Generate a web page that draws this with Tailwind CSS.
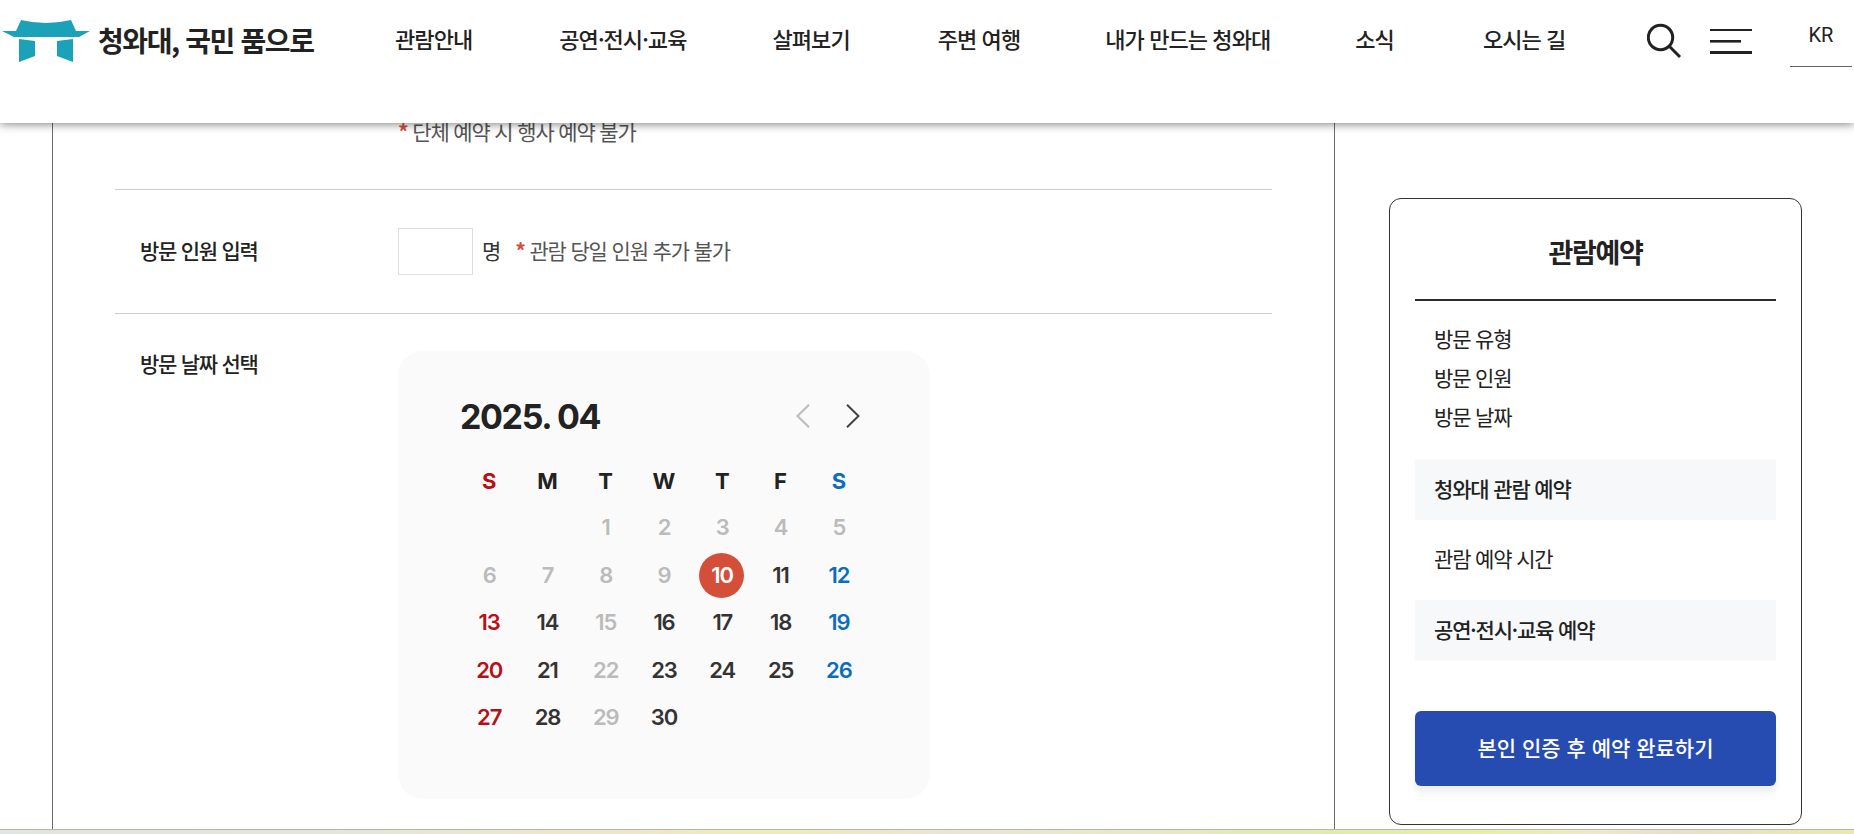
<!DOCTYPE html>
<html lang="ko">
    <head>
        <meta charset="UTF-8">
        <meta name="viewport" content="width=device-width, initial-scale=1.0">
        <title>관람예약 - 청와대, 국민 품으로</title>
        <script src="https://cdn.jsdelivr.net/npm/@tailwindcss/browser@4"></script>
    </head>
    <body class="h-[834px] overflow-hidden bg-white text-[#222] font-['Noto_Sans_CJK_KR',sans-serif] flex flex-col">

        <!-- Header -->
        <header class="relative z-10 h-[123px] shrink-0 bg-white shadow-[0_1px_9px_rgba(0,0,0,0.5)] flex items-start">
            <a href="#" class="flex items-start pl-[2px] w-[395px] shrink-0">
              <svg class="mt-[19px] w-[88px] h-[44px] shrink-0" viewBox="0 0 88 44" fill="#1ba1b8">
                <path d="M0 12H14L19 1Q44 7 69 1L74 12H88L77 18H12Z"/>
                <path d="M17 20L33 22V37L17 43Z"/>
                <path d="M71 20L55 22V37L71 43Z"/>
              </svg>
              <span class="ml-[8px] mt-[20px] text-[28px] leading-[40px] font-bold tracking-[-0.05em] whitespace-nowrap">청와대, 국민 품으로</span>
            </a>
            <nav class="flex mt-[22px] text-[22px] leading-[32px] font-medium tracking-[-0.042em] whitespace-nowrap">
              <a href="#">관람안내</a>
              <a href="#" class="ml-[87px]">공연·전시·교육</a>
              <a href="#" class="ml-[86px]">살펴보기</a>
              <a href="#" class="ml-[88px]">주변 여행</a>
              <a href="#" class="ml-[85px]">내가 만드는 청와대</a>
              <a href="#" class="ml-[85px]">소식</a>
              <a href="#" class="ml-[89px]">오시는 길</a>
            </nav>
            <div class="ml-auto flex items-start pr-[2px]">
              <svg class="mt-[23px] w-[35px] h-[36px]" viewBox="0 0 35 36" fill="none" stroke="#222" stroke-width="3">
                <circle cx="13.5" cy="14.5" r="12.2"/>
                <path d="M22.3 23.3L33 34"/>
              </svg>
              <svg class="ml-[28px] mt-[28px] w-[42px] h-[28px]" viewBox="0 0 42 28" fill="#222">
                <rect x="0" y="1" width="42" height="2"/>
                <rect x="0" y="12" width="31" height="2.6"/>
                <rect x="0" y="23" width="42" height="3"/>
              </svg>
              <div class="ml-[38px] w-[62px] h-[67px] border-b border-[#666] pt-[20px] text-center text-[20px] leading-[30px] font-['Roboto',sans-serif]">KR</div>
            </div>
        </header>

        <main class="h-[706px] shrink-0 flex items-start">
            <!-- Reservation form -->
            <section class="ml-[52px] w-[1283px] h-[706px] border-x border-[#6b6b6b] px-[62px]">
              <div class="flex items-start h-[67px] border-b border-[#ccc] pl-[283px]">
                <p class="-mt-[8px] text-[21px] leading-[32px] text-[#555] tracking-[-0.055em]"><span class="text-[#d44f3a] font-bold">*</span> 단체 예약 시 행사 예약 불가</p>
              </div>

              <div class="h-[124px] border-b border-[#ccc] flex items-center text-[21px] leading-[30px] tracking-[-0.055em]">
                <label for="visitors" class="w-[258px] ml-[25px] pb-[4px] font-medium tracking-[-0.06em]">방문 인원 입력</label>
                <input id="visitors" type="text" class="w-[75px] h-[47px] border border-[#ddd] bg-white">
                <span class="ml-[9px] pb-[4px] text-[#333]">명</span>
                <p class="ml-[15px] pb-[4px] text-[#555]"><span class="text-[#d44f3a] font-bold">*</span> 관람 당일 인원 추가 불가</p>
              </div>

              <div class="pt-[37px] flex items-start">
                <h3 class="w-[258px] ml-[25px] -mt-[2px] text-[21px] leading-[28px] font-medium tracking-[-0.06em]">방문 날짜 선택</h3>

                <div class="w-[532px] h-[448px] rounded-[25px] bg-[#fafafa] pt-[42px] px-[62px] font-['Inter',sans-serif]">
                  <div class="flex items-center justify-between h-[46px] pr-[8px]">
                    <h4 class="text-[34px] leading-[45px] font-bold tracking-[-0.04em]">2025. 04</h4>
                    <div class="flex gap-[36px]">
                      <svg class="w-[14px] h-[24px]" viewBox="0 0 14 24" fill="none" stroke="#bbb" stroke-width="2"><path d="M13 0.7L1.5 12L13 23.3"/></svg>
                      <svg class="w-[14px] h-[24px]" viewBox="0 0 14 24" fill="none" stroke="#444" stroke-width="2"><path d="M1 0.7L12.5 12L1 23.3"/></svg>
                    </div>
                  </div>

                  <div class="mt-[19px] w-[408px] grid grid-cols-7 text-center text-[22px] leading-[46px] font-bold text-[#222]">
                    <span class="text-[#b90e15]">S</span><span>M</span><span>T</span><span>W</span><span>T</span><span>F</span><span class="text-[#0a6ebd]">S</span>
                  </div>
                  <div class="w-[408px] grid grid-cols-7 auto-rows-[47.5px] text-center text-[22px] leading-[47px] font-semibold tracking-[-0.05em] text-[#333]">
                    <span></span><span></span>
                    <span class="text-[#bbb]">1</span>
                    <span class="text-[#bbb]">2</span>
                    <span class="text-[#bbb]">3</span>
                    <span class="text-[#bbb]">4</span>
                    <span class="text-[#bbb]">5</span>

                    <span class="text-[#bbb]">6</span>
                    <span class="text-[#bbb]">7</span>
                    <span class="text-[#bbb]">8</span>
                    <span class="text-[#bbb]">9</span>
                    <span class="ml-[6px] mt-[1px] w-[45px] h-[45px] pl-[1px] leading-[45px] rounded-full bg-[#d44f3a] text-white">10</span>
                    <span>11</span>
                    <span class="text-[#0a6ebd]">12</span>

                    <span class="text-[#b90e15]">13</span>
                    <span>14</span>
                    <span class="text-[#bbb]">15</span>
                    <span>16</span>
                    <span>17</span>
                    <span>18</span>
                    <span class="text-[#0a6ebd]">19</span>

                    <span class="text-[#b90e15]">20</span>
                    <span>21</span>
                    <span class="text-[#bbb]">22</span>
                    <span>23</span>
                    <span>24</span>
                    <span>25</span>
                    <span class="text-[#0a6ebd]">26</span>

                    <span class="text-[#b90e15]">27</span>
                    <span>28</span>
                    <span class="text-[#bbb]">29</span>
                    <span>30</span>
                  </div>
                </div>
              </div>
            </section>

            <!-- Reservation summary -->
            <aside class="ml-[54px] mt-[75px] w-[413px] h-[627px] rounded-[12px] border border-[#333] px-[25px] tracking-[-0.072em]">
              <h2 class="h-[102px] border-b-2 border-[#2b2b2b] pt-[33px] text-center text-[27px] leading-[40px] font-bold tracking-[-0.05em]">관람예약</h2>
              <ul class="mt-[18px] pl-[19px] text-[21px] leading-[39px]">
                <li>방문 유형</li>
                <li>방문 인원</li>
                <li>방문 날짜</li>
              </ul>
              <p class="mt-[23px] h-[61px] bg-[#f6f8fa] pl-[19px] text-[21px] leading-[58px] font-medium">청와대 관람 예약</p>
              <p class="h-[80px] pl-[19px] text-[21px] leading-[76px]">관람 예약 시간</p>
              <p class="h-[61px] bg-[#f6f8fa] pl-[19px] text-[21px] leading-[58px] font-medium">공연·전시·교육 예약</p>
              <button class="mt-[50px] w-full h-[75px] pb-[1px] rounded-[6px] bg-[#264cb2] text-white text-[21px] font-medium tracking-normal shadow-[0_6px_6px_rgba(0,0,0,0.07)]">본인 인증 후 예약 완료하기</button>
            </aside>
        </main>

        <footer class="h-[5px] shrink-0 border-t border-[#b5b8a8] bg-[linear-gradient(to_right,#dfe5e0_0%,#e2e7d8_18%,#f0e6c6_34%,#f0ebb4_42%,#eae4d4_51%,#e8e8c8_60%,#e0eba8_72%,#e8f0a0_80%,#efe8c8_86%,#e6e0cc_90%,#ece8a8_100%)]"></footer>
    </body>
</html>
